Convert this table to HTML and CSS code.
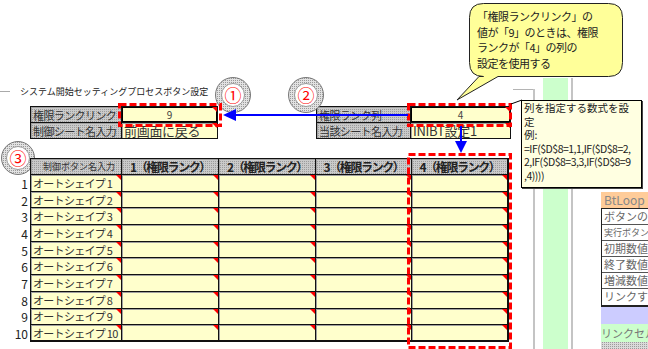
FILE: index.html
```html
<!DOCTYPE html>
<html lang="ja">
<head>
<meta charset="utf-8">
<title>システム開始セッティングプロセスボタン設定</title>
<link rel="stylesheet" href="styles.css">
</head>
<body>
<div class="sheet">
  <div class="left">
    <div class="title"><span class="tick"></span><span>システム開始セッティングプロセスボタン設定</span></div>
    <div class="blocks">
      <div class="blk blk-a">
        <div class="cell lab">権限ランクリンク</div>
        <div class="cell val num thick mark">9</div>
        <div class="cell lab">制御シート名入力</div>
        <div class="cell val big mark">前画面に戻る</div>
      </div>
      <div class="blk blk-b">
        <div class="cell lab">権限ランク列</div>
        <div class="cell val num thick mark">4</div>
        <div class="cell lab">当該シート名入力</div>
        <div class="cell val big mark">INIBT設定1</div>
      </div>
    </div>
    <div class="badge b3"><span>③</span></div>
    <div class="tbl">
      <div class="rn"></div>
      <div class="c hd small first">制御ボタン名入力</div>
      <div class="c hd">1（権限ランク）</div>
      <div class="c hd">2（権限ランク）</div>
      <div class="c hd">3（権限ランク）</div>
      <div class="c hd last">4（権限ランク）</div>

      <div class="rn">1</div><div class="c nm first mark">オートシェイプ 1</div><div class="c v mark"></div><div class="c v mark"></div><div class="c v mark"></div><div class="c v last mark"></div>
      <div class="rn">2</div><div class="c nm first mark">オートシェイプ 2</div><div class="c v mark"></div><div class="c v mark"></div><div class="c v mark"></div><div class="c v last mark"></div>
      <div class="rn">3</div><div class="c nm first mark">オートシェイプ 3</div><div class="c v mark"></div><div class="c v mark"></div><div class="c v mark"></div><div class="c v last mark"></div>
      <div class="rn">4</div><div class="c nm first mark">オートシェイプ 4</div><div class="c v mark"></div><div class="c v mark"></div><div class="c v mark"></div><div class="c v last mark"></div>
      <div class="rn">5</div><div class="c nm first mark">オートシェイプ 5</div><div class="c v mark"></div><div class="c v mark"></div><div class="c v mark"></div><div class="c v last mark"></div>
      <div class="rn">6</div><div class="c nm first mark">オートシェイプ 6</div><div class="c v mark"></div><div class="c v mark"></div><div class="c v mark"></div><div class="c v last mark"></div>
      <div class="rn">7</div><div class="c nm first mark">オートシェイプ 7</div><div class="c v mark"></div><div class="c v mark"></div><div class="c v mark"></div><div class="c v last mark"></div>
      <div class="rn">8</div><div class="c nm first mark">オートシェイプ 8</div><div class="c v mark"></div><div class="c v mark"></div><div class="c v mark"></div><div class="c v last mark"></div>
      <div class="rn">9</div><div class="c nm first mark">オートシェイプ 9</div><div class="c v mark"></div><div class="c v mark"></div><div class="c v mark"></div><div class="c v last mark"></div>
      <div class="rn">10</div><div class="c nm first mark bot">オートシェイプ 10</div><div class="c v mark bot"></div><div class="c v mark bot"></div><div class="c v mark bot"></div><div class="c v last mark bot"></div>
    </div>
  </div>

  <div class="side">
    <div class="vl1"></div>
    <div class="green"></div>
    <div class="vl2"></div>
    <div class="btloop">
      <div class="bt-h">BtLoop</div>
      <div class="bt-list">
        <div class="bt-r">ボタンの見</div>
        <div class="bt-r sm">実行ボタン</div>
        <div class="bt-r">初期数値</div>
        <div class="bt-r">終了数値</div>
        <div class="bt-r">増減数値</div>
        <div class="bt-r">リンクす</div>
      </div>
      <div class="bt-lav"></div>
      <div class="bt-grn">リンクセル</div>
      <div class="bt-gray"></div>
    </div>
  </div>

  <svg class="ov" width="648" height="349" viewBox="0 0 648 349">
    <rect x="119.5" y="104.5" width="101" height="21" fill="none" stroke="#ff0000" stroke-width="3" stroke-dasharray="7 3"/>
    <rect x="408.5" y="104.5" width="102" height="21" fill="none" stroke="#ff0000" stroke-width="3" stroke-dasharray="7 3"/>
    <rect x="408.5" y="154.5" width="102" height="193" fill="none" stroke="#ff0000" stroke-width="3" stroke-dasharray="7 3"/>
    <line x1="234" y1="115" x2="408" y2="115" stroke="#0000ff" stroke-width="2"/>
    <polygon points="223,115 236,109 236,121" fill="#0000ff"/>
    <line x1="461" y1="126" x2="461" y2="142" stroke="#0000ff" stroke-width="2"/>
    <polygon points="461,153 455,141 467,141" fill="#0000ff"/>
    <line x1="511" y1="104" x2="522" y2="100" stroke="#000" stroke-width="1"/>
    <path d="M483.5 3.5 H608.5 Q622.5 3.5 622.5 17.5 V62.5 Q622.5 76.5 608.5 76.5 H498 L457 100 L479 76.5 H483.5 Q469.5 76.5 469.5 62.5 V17.5 Q469.5 3.5 483.5 3.5 Z" fill="#ffff99" stroke="#222" stroke-width="1"/>
  </svg>

  <div class="badge b1"><span>①</span></div>
  <div class="badge b2"><span>②</span></div>

  <div class="callout-text">「権限ランクリンク」の<br>値が「9」のときは、権限<br>ランクが「4」の列の<br>設定を使用する</div>

  <div class="tip"><div class="tl">列を指定する数式を設</div><div class="tl">定</div><div class="tl">例:</div><div class="tl f">=IF($D$8=1,1,IF($D$8=2,</div><div class="tl f">2,IF($D$8=3,3,IF($D$8=9</div><div class="tl f">,4))))</div></div>
</div>
</body>
</html>
```

FILE: styles.css
```css
* { box-sizing: border-box; }
body {
  margin: 0;
  background: #fff;
  font-family: "Noto Sans CJK JP", "Noto Sans", sans-serif;
  color: #222;
}
.sheet {
  position: relative;
  width: 648px;
  height: 349px;
  overflow: hidden;
  display: flex;
}
.left {
  position: relative;
  width: 520px;
  flex-shrink: 0;
  padding-top: 84px;
}
.title {
  display: flex;
  align-items: center;
  height: 14px;
  font-size: 9px;
  white-space: nowrap;
  color: #1a1a1a;
}
.tick {
  width: 10px;
  height: 1px;
  background: #aaa;
  margin-right: 10px;
}
.blocks {
  display: flex;
  margin-top: 8px;
  padding-left: 30px;
  gap: 98px;
}
.blk {
  display: grid;
  border-top: 1px solid #111;
  border-left: 1px solid #111;
}
.blk-a { grid-template-columns: 91px 96px; grid-template-rows: 16px 16px; }
.blk-b { grid-template-columns: 94px 100px; grid-template-rows: 16px 16px; }
.cell {
  position: relative;
  display: flex;
  align-items: center;
  white-space: nowrap;
  border-right: 1px solid #111;
  border-bottom: 1px solid #111;
  box-shadow: inset 1px 1px 0 #a0a0a0;
}
.lab {
  background: repeating-conic-gradient(#9c9c9c 0 25%, #cacaca 0 100%) 0 0 / 2px 2px;
  font-size: 11px;
  letter-spacing: -0.6px;
  padding-left: 2px;
  color: #333;
}
.val { background: #ffffcc; }
.num { justify-content: center; font-size: 10px; color: #444; }
.big { font-size: 13px; padding-left: 2px; color: #333; letter-spacing: -0.3px; }
.thick { box-shadow: inset 0 0 0 1px #000; }
.mark::after {
  content: "";
  position: absolute;
  top: 0;
  right: 0;
  border-left: 5px solid transparent;
  border-top: 5px solid #ff0000;
}

.tbl {
  position: relative;
  z-index: 1;
  display: grid;
  grid-template-columns: 30px 92px 97px 97px 96px 97px;
  grid-template-rows: 17px repeat(10, 16.7px);
  margin-top: 19px;
}
.rn {
  display: flex;
  align-items: center;
  justify-content: flex-end;
  padding-right: 2px;
  font-size: 12px;
  color: #222;
}
.c {
  position: relative;
  display: flex;
  align-items: center;
  white-space: nowrap;
  border-right: 1px solid #111;
  border-bottom: 1px solid #111;
  box-shadow: inset 1px 1px 0 #a0a0a0;
}
.c.first { border-left: 1px solid #111; }
.c.last { border-right-width: 2px; }
.c.bot { border-bottom-width: 2px; }
.c.hd {
  border-top: 1px solid #111;
  background: repeating-conic-gradient(#9c9c9c 0 25%, #cacaca 0 100%) 0 0 / 2px 2px;
  justify-content: center;
  font-size: 12px;
  font-weight: 700;
  letter-spacing: -1.4px;
  color: #222;
}
.c.hd.small { font-size: 9px; font-weight: 400; letter-spacing: 0; padding-left: 6px; color: #333; }
.nm { background: #ffffcc; font-size: 11px; letter-spacing: -0.7px; padding-left: 2px; color: #333; }
.v { background: #ffffcc; }

.side {
  display: flex;
  flex-shrink: 0;
}
.vl1 {
  position: relative;
  flex-shrink: 0;
  width: 2px;
  margin-left: 13px;
  margin-top: 89px;
  background: #c4c4c4;
}
.vl1::before {
  content: "";
  position: absolute;
  left: -20px;
  top: 0;
  width: 20px;
  height: 1px;
  background: #b4b4b4;
}
.green {
  flex-shrink: 0;
  width: 25px;
  margin-left: 8px;
  margin-top: 78px;
  background: #ccffcc;
}
.vl2 {
  flex-shrink: 0;
  width: 2px;
  margin-left: 3px;
  margin-top: 78px;
  background: #c4c4c4;
}
.btloop {
  flex-shrink: 0;
  width: 47px;
  margin-left: 28px;
  margin-top: 192px;
}
.bt-h {
  height: 16px;
  background: #ffcc99;
  font-size: 12px;
  line-height: 16px;
  color: #888;
  padding-left: 3px;
  white-space: nowrap;
  overflow: hidden;
}
.bt-list {
  background: #fff;
  border-left: 1px solid #222;
  border-top: 1px solid #222;
  border-bottom: 2px solid #222;
}
.bt-r {
  height: 16px;
  border-bottom: 1px solid #555;
  font-size: 11px;
  line-height: 15px;
  color: #666;
  padding-left: 2px;
  white-space: nowrap;
  overflow: hidden;
}
.bt-r:last-child { border-bottom: 0; }
.bt-r.sm { font-size: 9px; }
.bt-lav { height: 17px; background: #ccccff; }
.bt-grn {
  height: 18px;
  background: #ccffcc;
  font-size: 11px;
  line-height: 18px;
  color: #777;
  white-space: nowrap;
  overflow: hidden;
}
.bt-gray {
  height: 10px;
  background: repeating-conic-gradient(#9c9c9c 0 25%, #dadada 0 100%) 0 0 / 2px 2px;
}

.ov {
  position: absolute;
  left: 0;
  top: 0;
  z-index: 5;
  pointer-events: none;
}
.badge {
  position: absolute;
  width: 36px;
  height: 36px;
  border-radius: 50%;
  border: 1px solid #777;
  background: repeating-conic-gradient(#9a9a9a 0 25%, #e2e2e2 0 100%) 0 0 / 2px 2px;
  display: flex;
  align-items: center;
  justify-content: center;
  z-index: 4;
}
.badge span {
  width: 24px;
  height: 24px;
  border-radius: 50%;
  background: #fff;
  border: 1px solid #999;
  color: #ff0000;
  font-size: 17px;
  line-height: 22px;
  text-align: center;
}
.b1 { left: 215px; top: 77px; }
.b2 { left: 288px; top: 77px; }
.b3 { left: 1px; top: 141px; width: 34px; height: 34px; z-index: 0; }
.callout-text {
  position: absolute;
  left: 477px;
  top: 9px;
  z-index: 6;
  font-size: 11px;
  line-height: 15.5px;
  letter-spacing: -0.5px;
  white-space: nowrap;
  color: #222;
}
.tip {
  position: absolute;
  left: 521px;
  top: 100px;
  width: 121px;
  height: 88px;
  z-index: 6;
  border: 1px solid #000;
  box-shadow: 1px 1px 0 #444;
  background: #ffffe1;
  padding: 0 0 0 2px;
  white-space: nowrap;
  color: #222;
}
.tl {
  height: 13.5px;
  font-size: 10.5px;
  line-height: 13.5px;
}
.tl.f { letter-spacing: -0.5px; }
```
